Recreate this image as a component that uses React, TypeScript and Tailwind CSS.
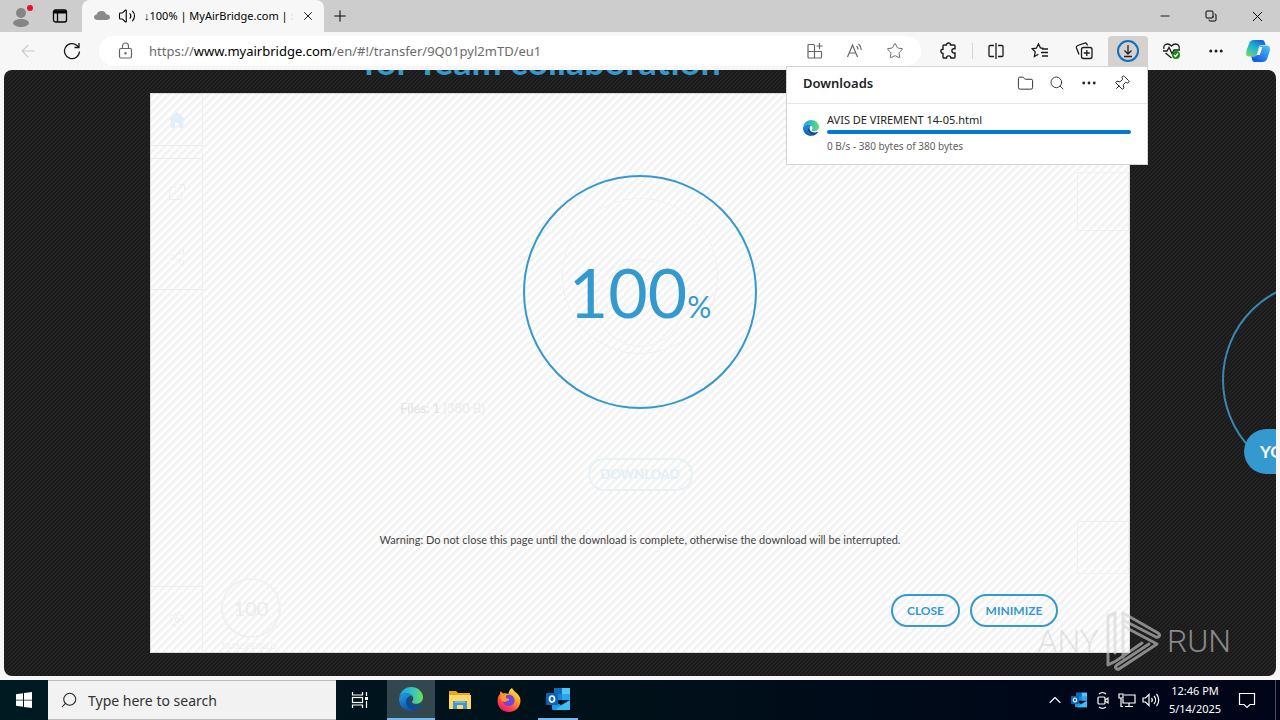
import type { ReactNode } from "react";
import {
  ArrowLeft,
  ChevronUp,
  Copy,
  Ellipsis,
  ExternalLink,
  Folder,
  Minus,
  Pin,
  Plus,
  Search,
  Settings,
  Share2,
  Star,
  Volume2,
  X,
} from "lucide-react";
import { clsx } from "clsx";

type IconButtonProps = {
  label: string;
  className?: string;
  children: ReactNode;
};

function IconButton({ label, className, children }: IconButtonProps) {
  return (
    <button
      type="button"
      aria-label={label}
      className={clsx("flex shrink-0 items-center justify-center", className)}
    >
      {children}
    </button>
  );
}

function EdgeLogo({ size }: { size: number }) {
  const id = `edge${size}`;
  return (
    <svg width={size} height={size} viewBox="0 0 24 24">
      <defs>
        <linearGradient id={`${id}a`} x1="0" y1="0.3" x2="1" y2="0.3">
          <stop offset="0" stopColor="#1b9de2" />
          <stop offset="0.5" stopColor="#2fc2c6" />
          <stop offset="1" stopColor="#6be05a" />
        </linearGradient>
        <linearGradient id={`${id}b`} x1="0" y1="0" x2="0.4" y2="1">
          <stop offset="0" stopColor="#1e9fe8" />
          <stop offset="1" stopColor="#0f56a8" />
        </linearGradient>
      </defs>
      <path
        d="M.3 10.5C1.2 4.400 6 0 12 0c7 0 12 5 12 10.300 0 4-3 6.500-6.600 6.500-2.800 0-4.400-1-4.400-1.900 0-.7 1.300-1.200 1.300-3.200C14.300 8.600 11 6.300 7.300 6.300 4.200 6.300 1.600 8 .3 10.500z"
        fill={`url(#${id}a)`}
      />
      <path
        d="M.2 11C1.500 7.700 4.400 6.200 7.300 6.200c3.200 0 5.600 1.500 6.600 3.500-1-.6-2-.8-3-.4-2.600 1-4 3.600-3.600 6.700.4 3.400 3.400 6.800 7.300 7.700-1 .2-1.800.3-2.600.3C5.400 24 0 18.700 0 12.500c0-.5 0-1 .2-1.500z"
        fill={`url(#${id}b)`}
      />
      <path
        d="M10.900 9.300c-3 1.200-4.400 4.200-3.500 7.500 1 3.900 4.600 6.500 7.900 6.700 3.300-.8 5.700-2.800 7.100-5.100.4-.6-.1-1-.7-.7-4.800 2.300-10.900.4-11.700-3.900-.4-1.900.1-3.500.9-4.500z"
        fill="#0c4a9a"
      />
    </svg>
  );
}

function OutlookLogo({ width, height }: { width: number; height: number }) {
  return (
    <svg width={width} height={height} viewBox="0 0 24 22">
      <path d="M8 0h16v12H8z" fill="#1784d8" />
      <path d="M16 0h8v6h-8z" fill="#50c6f7" />
      <path d="M8 0h8v6H8z" fill="#0f6cbd" />
      <path d="M16 6h8v6h-8z" fill="#2aa7ea" />
      <path d="M6 12l9 5 9-5v9a1 1 0 0 1-1 1H7a1 1 0 0 1-1-1z" fill="#1b9be6" />
      <path d="M24 12v9a1 1 0 0 1-1 1H9z" fill="#41bdf5" />
      <rect y="5" width="12" height="12" rx="1" fill="#0a63b8" />
      <ellipse cx="6" cy="11" rx="2.500" ry="3" fill="none" stroke="#fff" strokeWidth="1.700" />
    </svg>
  );
}

function FirefoxLogo() {
  return (
    <svg width="24" height="24" viewBox="0 0 24 24">
      <defs>
        <linearGradient id="fox" x1="0.8" y1="0" x2="0.2" y2="1">
          <stop offset="0" stopColor="#fff14a" />
          <stop offset="0.4" stopColor="#ff9a1f" />
          <stop offset="0.75" stopColor="#ff3d4d" />
          <stop offset="1" stopColor="#d8156f" />
        </linearGradient>
      </defs>
      <path
        d="M15 0c1 3 6 5 8 9.500C25 17 20 24 12 24S.5 18.600.6 12.600C.7 9 2 7 3 6c0-1 .2-2 .8-3 .7 1.200 1.500 2 2.600 2.400C8 5 10 5 11.500 6 11.500 3.600 13 1 15 0z"
        fill="url(#fox)"
      />
      <path
        d="M9 7.500c3-1.600 8-.6 8.600 4.500.3 3.600-2.600 6-5.700 6-3.400 0-6-2.400-5.900-5 1 .7 2.600.7 3.600 0 1-.6 1.900-.6 2.600-1-.4-1-1.600-1.300-2.700-1.400-.9-.3-1.200-1.700-.5-3.100z"
        fill="#7542e5"
      />
      <path d="M4 6c2 0 4 .5 5.500 1.600-1 1-1 2.500.3 3 1.200.2 2.300.5 2.500 1.300-1 .9-2.300.7-3.300 1.500-1.400.9-3 .3-4.300-.6C3.600 10.800 3.300 8 4 6z" fill="#ff9626" />
    </svg>
  );
}

function ExplorerLogo() {
  return (
    <svg width="22" height="20" viewBox="0 0 22 20">
      <path d="M0 1h7l2 2h12v5H0z" fill="#e8a917" />
      <path d="M0 5h22v14H0z" fill="#ffd766" />
      <path d="M4 11h14v8h-4v-4H8v4H4z" fill="#3f97d3" />
      <path d="M6 11h10v2H6z" fill="#69b8e8" />
    </svg>
  );
}

function CopilotLogo() {
  return (
    <svg width="24" height="24" viewBox="0 0 24 24">
      <defs>
        <linearGradient id="cpa" x1="0.7" y1="0" x2="0" y2="1">
          <stop offset="0" stopColor="#1466d8" />
          <stop offset="0.4" stopColor="#1cb2d4" />
          <stop offset="1" stopColor="#7bdc62" />
        </linearGradient>
        <linearGradient id="cpb" x1="1" y1="0" x2="0.2" y2="1">
          <stop offset="0" stopColor="#4cc8fa" />
          <stop offset="1" stopColor="#1551e0" />
        </linearGradient>
      </defs>
      <path
        d="M8 1h8c2 0 2.600 1.500 3 3l.5 2H16c-2 0-3 1-3.500 3l-1.500 6c-.5 1.700-1.500 2.500-3 2.500H3C0 17.500-.3 15 .5 12L3 4.500C3.700 2.200 5.500 1 8 1z"
        fill="url(#cpa)"
      />
      <path
        d="M16 6.500h4.500c3.200 0 4 2.500 3.200 5.500L21.500 19c-.8 2.500-2.500 4-5 4H9c-2 0-2.600-1.200-3-2.700l-.7-2.800H8c1.700 0 2.700-1 3.200-2.700l1.800-5.800c.5-1.700 1.400-2.500 3-2.500z"
        fill="url(#cpb)"
      />
      <path d="M13.600 8h2.800l-2.600 8h-3z" fill="#fff" />
    </svg>
  );
}

function TitleBar() {
  return (
    <header className="flex h-8 shrink-0 items-stretch bg-[#cdcdcd] text-black">
      <IconButton label="Profile" className="w-11">
        <svg width="22" height="24" viewBox="0 0 22 24">
          <circle cx="10" cy="9" r="5" fill="#858585" />
          <ellipse cx="10" cy="19" rx="8" ry="4" fill="#858585" />
          <circle cx="19" cy="4" r="3" fill="#e81123" />
        </svg>
      </IconButton>
      <IconButton label="Tab actions" className="w-8">
        <svg width="16" height="16" viewBox="0 0 16 16" fill="none" stroke="currentColor">
          <rect x="1.500" y="2" width="13" height="12" rx="2" strokeWidth="1.300" />
          <path d="M1.500 4h13" strokeWidth="3" />
          <path d="M5.500 4v10" strokeWidth="1.300" />
        </svg>
      </IconButton>
      <div className="ml-1.5 flex w-[242px] items-center rounded-t-lg bg-[#f7f7f7] pl-3 pr-2">
        <svg width="16" height="12" viewBox="0 0 16 12" className="shrink-0">
          <path d="M3.500 10C1.500 10 0 8.800 0 7.200 0 5.800 1 4.800 2.600 4.500 3.200 2 5.200 1 7.600 1c2.200 0 4 1.200 4.500 3.200 2.200 0 3.900 1.200 3.900 3 0 1.700-1.500 2.800-3.400 2.800z" fill="#8a8a8a" />
        </svg>
        <Volume2 size={18} strokeWidth={1.5} className="ml-2 shrink-0" />
        <span className="ml-2 flex-1 whitespace-nowrap text-[11px] leading-4">
          ↓100% | MyAirBridge.com | <span className="text-gray-300">:</span>
        </span>
        <IconButton label="Close tab" className="size-4">
          <X size={14} strokeWidth={1.5} />
        </IconButton>
      </div>
      <IconButton label="New tab" className="w-8">
        <Plus size={18} strokeWidth={1.3} />
      </IconButton>
      <div className="ml-auto flex">
        <IconButton label="Minimize window" className="w-[46px]">
          <Minus size={14} strokeWidth={1.5} />
        </IconButton>
        <IconButton label="Restore window" className="w-[46px]">
          <Copy size={12} strokeWidth={2} className="-scale-x-100 rotate-90" />
        </IconButton>
        <IconButton label="Close window" className="w-[46px]">
          <X size={17} strokeWidth={1.4} />
        </IconButton>
      </div>
    </header>
  );
}

function AddressBar() {
  return (
    <div className="flex h-[30px] min-w-0 flex-1 items-center rounded-full bg-white pl-4 pr-1.5 text-[#666]">
      <svg width="20" height="20" viewBox="0 0 20 20" fill="none" stroke="currentColor" strokeWidth="1.200" className="shrink-0">
        <rect x="4.500" y="7.500" width="12" height="9.500" rx="1.500" />
        <path d="M7.500 7.500V5a3 3 0 0 1 6 0v2.500" />
        <circle cx="10.500" cy="12.200" r=".6" fill="currentColor" />
      </svg>
      <a
        href="#transfer"
        className="ml-3.5 min-w-0 flex-1 truncate text-[13px] leading-5 text-[#6b6b6b]"
      >
        https://<span className="text-black">www.myairbridge.com</span>
        /en/#!/transfer/9Q01pyl2mTD/eu1
      </a>
      <IconButton label="Install app" className="w-10">
        <svg width="18" height="18" viewBox="0 0 18 18" fill="none" stroke="currentColor" strokeWidth="1.200">
          <path d="M8 2.500H3a1 1 0 0 0-1 1V15a1 1 0 0 0 1 1h11.500a1 1 0 0 0 1-1v-5.500M2 9.500h13.500M8.500 2.500V16M13.500 1v6M10.500 4h6" />
        </svg>
      </IconButton>
      <IconButton label="Read aloud" className="w-10">
        <svg width="18" height="18" viewBox="0 0 18 18" fill="none" stroke="currentColor" strokeWidth="1.200">
          <path d="M1.500 15 6.500 3l5 12M3.300 11h6.500M10.500 4c1 .8 1.500 2 1.500 3.500M12.500 2C14.300 3.500 15.300 5.500 15.300 8" />
        </svg>
      </IconButton>
      <IconButton label="Add to favorites" className="w-10">
        <Star size={18} strokeWidth={1.3} />
      </IconButton>
    </div>
  );
}

function Toolbar() {
  return (
    <nav aria-label="Browser toolbar" className="flex h-[38px] shrink-0 items-center bg-[#f7f7f7] pb-1 pt-1 text-[#1b1b1b]">
      <IconButton label="Back" className="ml-2 w-10 text-[#c8c8c8]">
        <ArrowLeft size={20} strokeWidth={1.3} />
      </IconButton>
      <IconButton label="Refresh" className="ml-1 mr-[7px] w-10">
        <svg width="18" height="18" viewBox="0 0 18 18" fill="none" stroke="currentColor" strokeWidth="1.300">
          <path d="M16.500 9.500A7.500 7.500 0 1 1 14 3.500l1.800 1.700M16 1v4.500h-4.500" />
        </svg>
      </IconButton>
      <AddressBar />
      <IconButton label="Extensions" className="ml-2 w-10">
        <svg width="18" height="18" viewBox="0 0 18 18" fill="none" stroke="currentColor" strokeWidth="1.400">
          <path d="M4 3h2.500a2 2 0 0 1 4 0H14a1 1 0 0 1 1 1v2.800h-1a2 2 0 0 0 0 4.200h1v4a1 1 0 0 1-1 1h-3.200a2 2 0 0 0-4.300 0H4a1 1 0 0 1-1-1v-3.500a2.100 2.100 0 0 1 0-4.300V4a1 1 0 0 1 1-1z" />
        </svg>
      </IconButton>
      <span className="mx-[3px] h-4 w-px shrink-0 bg-gray-300" />
      <div className="flex gap-1">
        <IconButton label="Split screen" className="w-10">
          <svg width="18" height="18" viewBox="0 0 18 18" fill="none" stroke="currentColor" strokeWidth="1.300">
            <path d="M7 3.500H3a1 1 0 0 0-1 1v9a1 1 0 0 0 1 1h4M11 3.500h4a1 1 0 0 1 1 1v9a1 1 0 0 1-1 1h-4M9 1v16" />
          </svg>
        </IconButton>
        <IconButton label="Favorites" className="w-10">
          <svg width="18" height="18" viewBox="0 0 18 18" fill="none" stroke="currentColor" strokeWidth="1.300">
            <path d="M12.500 6.500 9.500 6 7.500 2 5.300 6.200 1.200 6.800l3 3.100-.8 4.600 4-2.200M11 7h6M10 10.500h7M11 14h6" />
          </svg>
        </IconButton>
        <IconButton label="Collections" className="w-10">
          <svg width="18" height="18" viewBox="0 0 18 18" fill="none" stroke="currentColor" strokeWidth="1.300">
            <rect x="6.500" y="5.500" width="10.500" height="11" rx="2" />
            <path d="M4 12.500 1.500 6a2 2 0 0 1 1.200-2.500l7-2.300a1.800 1.800 0 0 1 2.300 1l.5 1.200M11.800 8v6M8.800 11h6" />
          </svg>
        </IconButton>
        <IconButton label="Downloads" className="h-[30px] w-10 rounded-t bg-[#d4d1cf]">
          <svg width="22" height="22" viewBox="0 0 22 22" fill="none">
            <circle cx="11" cy="11" r="10" stroke="#1170bf" strokeWidth="2" />
            <path d="M11 5v8.500M7.500 10.500 11 14l3.500-3.500M7 16.500h8" stroke="#222" strokeWidth="1.300" />
          </svg>
        </IconButton>
        <IconButton label="Browser essentials" className="w-10">
          <svg width="20" height="18" viewBox="0 0 20 18" fill="none" stroke="currentColor" strokeWidth="1.300">
            <path d="M2 7C1 4 3 2 5.500 2 7.500 2 8.500 3 9.500 4c1-1 2-2 4-2C16 2 18 4 17 7M1 9h4l2-3.500 3 6L12 8h6M3.500 11l6 5" />
            <circle cx="14" cy="13" r="4" fill="#138a13" stroke="none" />
            <path d="m12 13 1.500 1.500 2.500-3" stroke="#fff" />
          </svg>
        </IconButton>
        <IconButton label="Settings and more" className="w-10">
          <Ellipsis size={18} strokeWidth={2} />
        </IconButton>
        <IconButton label="Copilot" className="w-10 pr-1">
          <CopilotLogo />
        </IconButton>
      </div>
    </nav>
  );
}

function DownloadsPopup() {
  return (
    <section
      aria-label="Downloads"
      className="absolute right-[132px] top-[66px] z-20 w-[362px] border border-[#d4d4d4] bg-white text-[#242424]"
    >
      <div className="flex h-[37px] items-center border-b border-[#e6e6e6] pb-1 pl-4 pr-2.5">
        <h2 className="flex-1 text-[13px] font-semibold leading-5">Downloads</h2>
        <IconButton label="Open downloads folder" className="w-8">
          <Folder size={17} strokeWidth={1.3} />
        </IconButton>
        <IconButton label="Search downloads" className="w-8">
          <Search size={16} strokeWidth={1.3} />
        </IconButton>
        <IconButton label="More options" className="w-8">
          <Ellipsis size={18} strokeWidth={1.8} />
        </IconButton>
        <IconButton label="Pin downloads" className="w-8">
          <Pin size={17} strokeWidth={1.3} className="rotate-45" />
        </IconButton>
      </div>
      <div className="flex items-start gap-2 pb-2.5 pl-4 pr-4 pt-2">
        <div className="pt-2">
          <EdgeLogo size={16} />
        </div>
        <div className="flex-1">
          <p className="text-[11px] leading-4">AVIS DE VIREMENT 14-05.html</p>
          <div className="mt-0.5 h-1 rounded-full bg-[#0078d4]" />
          <p className="mt-1 text-[10px] leading-4 text-[#616161]">0 B/s - 380 bytes of 380 bytes</p>
        </div>
      </div>
    </section>
  );
}

// the transfer page that shows faintly through the overlay
function FadedPage() {
  return (
    <div aria-hidden="true" className="absolute inset-0 flex justify-between text-[#ebebeb]">
      <div className="flex flex-1">
        <div className="flex w-[52px] flex-col border-r border-[#f0f0f0]">
          <div className="flex h-[52px] items-center justify-center border-b border-[#ededed]">
            <svg width="18" height="16" viewBox="0 0 18 16" fill="#e3eff8">
              <path d="M9 0 18 8h-2.500v8H11v-5H7v5H2.500V8H0z" />
            </svg>
          </div>
          <div className="mt-3 flex h-[132px] flex-col items-center justify-around border-y border-[#ededed]">
            <ExternalLink size={20} strokeWidth={1} />
            <Share2 size={18} strokeWidth={1} />
          </div>
          <div className="mt-auto flex h-[66px] items-center justify-center border-t border-[#ededed]">
            <Settings size={18} strokeWidth={1} />
          </div>
        </div>
        <div className="flex flex-col justify-end pl-[18px]">
          <div className="flex size-[60px] items-center justify-center rounded-full border-2 border-[#f0f0f0] text-[20px]">
            100
          </div>
          <p className="mt-0.5 text-[8px] leading-3 text-[#f0f0f0]">TRANSFERRED</p>
        </div>
      </div>
      <div className="flex w-[480px] flex-col items-center pt-[104px]">
        <div className="flex size-[156px] items-end justify-center rounded-full border border-[#f0f0f0] pb-1.5">
          <div className="size-[88px] rounded-full border border-[#f2f2f2]" />
        </div>
        <p className="mt-11 self-start text-[13px] leading-5 text-[#e2e2e2]">
          Files: 1 <span className="text-[#ececec]">(380 B)</span>
        </p>
        <span className="mt-10 flex h-[33px] w-[105px] items-center justify-center rounded-full border-2 border-[#e9f1f5] text-[13px] font-bold text-[#e4eef4]">
          DOWNLOAD
        </span>
      </div>
      <div className="flex flex-1 flex-col items-end pb-[78px] pt-[78px]">
        <div className="h-[59px] w-[52px] border border-[#f0f0f0]" />
        <div className="mt-auto h-[53px] w-[52px] border border-[#f0f0f0]" />
      </div>
    </div>
  );
}

function TransferDialog() {
  return (
    <div
      role="dialog"
      aria-label="Download progress"
      className="relative mx-auto mt-3 w-full max-w-[980px] shrink-0 border border-[#dcdcdc] bg-white bg-[linear-gradient(135deg,#f3f3f3_25%,#ffffff_25%,#ffffff_50%,#f3f3f3_50%,#f3f3f3_75%,#ffffff_75%)] bg-[length:8px_8px]"
    >
      <FadedPage />
      <div className="relative flex flex-col items-center pb-[25px] pt-[81px]">
        <div className="flex size-[234px] items-center justify-center rounded-full border-2 border-[#3399cf] text-[#3399cf]">
          <p className="flex items-baseline">
            <span className="text-[68px] leading-[80px]">100</span>
            <span className="text-[30px] leading-10">%</span>
          </p>
        </div>
        <p className="mt-[121px] text-[11px] leading-5 text-[#444]">
          Warning: Do not close this page until the download is complete, otherwise the download
          will be interrupted.
        </p>
        <div className="mt-11 flex gap-2.5 self-end pr-[71px] text-[12px] font-bold text-[#3399cf]">
          <button type="button" className="h-[33px] w-[69px] rounded-full border-2 border-[#3399cf]">
            CLOSE
          </button>
          <button type="button" className="h-[33px] w-[88px] rounded-full border-2 border-[#3399cf]">
            MINIMIZE
          </button>
        </div>
      </div>
    </div>
  );
}

function Watermark() {
  return (
    <div className="absolute bottom-1 right-[45px] flex h-[62px] items-center gap-1 font-[Roboto,'Liberation_Sans',sans-serif] text-[32px] font-light leading-none text-[#d2d2d2]/60">
      <span>ANY</span>
      <svg width="60" height="62" viewBox="0 0 60 62" fill="none" stroke="currentColor" strokeWidth="3" strokeLinejoin="round" strokeLinecap="round">
        <path d="M5 6v49l8-4 26-18M5 6l7-3v40M20 3v44M20 3l35 20c3 2 1 5-2 4L22 11M20 16l34 18-38 25c-3 1-5-2-2-4l32-21" />
      </svg>
      <span>RUN</span>
    </div>
  );
}

function PageContent() {
  return (
    <main className="relative mx-1 mb-1 mt-0 flex min-h-0 flex-1 flex-col overflow-hidden rounded-lg bg-[#1d1d1d] bg-[linear-gradient(135deg,#1a1a1a_25%,#232323_25%,#232323_50%,#1a1a1a_50%,#1a1a1a_75%,#232323_75%)] bg-[length:4px_4px] font-[Lato,'Liberation_Sans',sans-serif]">
      <h1 className="-mt-[29px] pr-[196px] text-center text-[36px] font-bold leading-10 text-[#3399cf]">
        for Team collaboration
      </h1>
      <div className="absolute -right-[146px] top-[210px] size-[200px] rounded-full border-2 border-[#3a87ad]" />
      <button
        type="button"
        className="absolute -right-[68px] top-[359px] h-[45px] w-[100px] rounded-full bg-[#3399cf] pl-4 text-left text-[17px] font-bold text-white"
      >
        YO
      </button>
      <TransferDialog />
      <Watermark />
    </main>
  );
}

function Taskbar() {
  return (
    <footer className="flex h-10 shrink-0 items-stretch bg-linear-to-r from-[#001a22] via-[#001019] to-[#000418] text-white">
      <IconButton label="Start" className="w-12">
        <svg width="16" height="16" viewBox="0 0 16 16" fill="#fff">
          <path d="M0 2.300 7 1.300v6.400H0zM8 1.100 16 0v7.700H8zM0 8.500h7v6.300l-7-1zM8 8.500h8V16l-8-1.100z" />
        </svg>
      </IconButton>
      <label className="flex w-72 items-center gap-2.5 border-y border-[#bdbdbd] bg-[#f2f2f2] pl-3 text-[#222]">
        <Search size={18} strokeWidth={1.4} className="-scale-x-100" />
        <input
          type="text"
          aria-label="Search"
          placeholder="Type here to search"
          className="min-w-0 flex-1 text-[14px] outline-none placeholder:text-[#333]"
        />
      </label>
      <IconButton label="Task view" className="w-12">
        <svg width="18" height="18" viewBox="0 0 18 18" fill="none" stroke="#fff" strokeWidth="1.200">
          <path d="M1.500 1v3h10V1M1.500 17v-3h10v3M15.500 1v4M15.500 10v7" />
          <rect x="1.500" y="6.500" width="10" height="5" />
          <path d="M14 6h3v3h-3z" fill="#fff" stroke="none" />
        </svg>
      </IconButton>
      <IconButton label="Microsoft Edge" className="ml-[3px] w-12 border-b-2 border-[#76b9ed] bg-[#33474f]">
        <EdgeLogo size={24} />
      </IconButton>
      <IconButton label="File Explorer" className="w-[49px]">
        <ExplorerLogo />
      </IconButton>
      <IconButton label="Firefox" className="w-[49px]">
        <FirefoxLogo />
      </IconButton>
      <IconButton label="Outlook" className="ml-[5px] w-10 border-b-2 border-[#76b9ed]">
        <OutlookLogo width={24} height={22} />
      </IconButton>
      <div className="ml-auto flex items-center pr-1">
        <IconButton label="Show hidden icons" className="w-6">
          <ChevronUp size={20} strokeWidth={1.3} />
        </IconButton>
        <IconButton label="Outlook notifications" className="w-6">
          <OutlookLogo width={16} height={16} />
        </IconButton>
        <IconButton label="Meet now" className="w-6">
          <svg width="16" height="18" viewBox="0 0 16 18" fill="none" stroke="#fff" strokeWidth="1.200">
            <rect x="3" y="6" width="7" height="7" rx="1" />
            <path d="m10 9 3-2v5l-3-2M4 3c2-2 5-2 7 0M4 16c2 1.500 5 1.500 7 0" />
          </svg>
        </IconButton>
        <IconButton label="Network" className="w-6">
          <svg width="18" height="16" viewBox="0 0 18 16" fill="none" stroke="#fff" strokeWidth="1.200">
            <path d="M6 3h11v8H5V7M11 11v3M7 14.500h8M1 2h4v4H1zM3 6v8.500h2" />
          </svg>
        </IconButton>
        <IconButton label="Volume" className="w-6">
          <svg width="18" height="16" viewBox="0 0 18 16" fill="none" stroke="#fff" strokeWidth="1.200">
            <path d="M1 6v4h2.500L7 13.500v-11L3.500 6zM9.500 6c1 1.200 1 2.800 0 4M12 4c2 2.300 2 5.700 0 8M14.500 2c3 3.500 3 8.500 0 12" />
          </svg>
        </IconButton>
        <div className="w-16 text-center text-[11px] leading-[18px]">
          <p>12:46 PM</p>
          <p>5/14/2025</p>
        </div>
        <IconButton label="Notifications" className="w-10">
          <svg width="18" height="18" viewBox="0 0 18 18" fill="none" stroke="#fff" strokeWidth="1.200">
            <path d="M1.500 2.500h15v11H12l-3 3-3-3H1.500z" />
          </svg>
        </IconButton>
        <span className="ml-2 h-10 w-px bg-[#4a4f5c]" />
      </div>
    </footer>
  );
}

export default function App() {
  return (
    <div className="relative flex h-screen flex-col overflow-hidden bg-[#f7f7f7] font-['Noto_Sans','Open_Sans',sans-serif]">
      <TitleBar />
      <Toolbar />
      <PageContent />
      <DownloadsPopup />
      <Taskbar />
    </div>
  );
}
